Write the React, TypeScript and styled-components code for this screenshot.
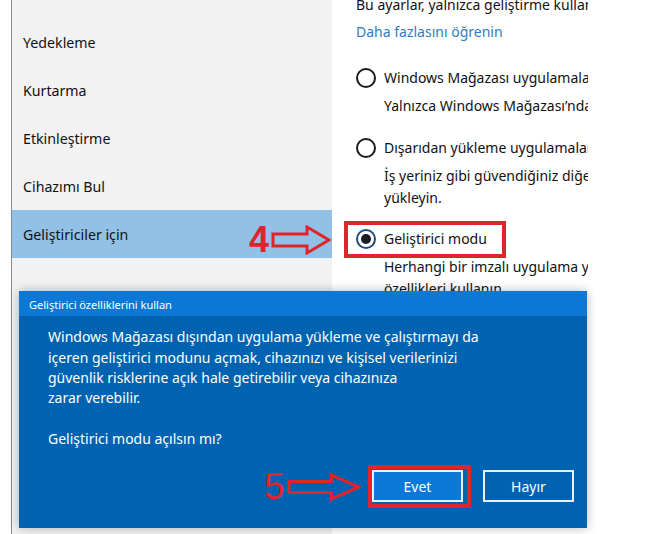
import React from "react";
import styled, { createGlobalStyle } from "styled-components";

const Global = createGlobalStyle`
  html, body { margin: 0; padding: 0; background: #ffffff; }
  body { font-family: "Noto Sans", "Open Sans", sans-serif; }
`;

const Stage = styled.div`
  position: relative;
  width: 671px;
  height: 534px;
  overflow: hidden;
  background: #ffffff;
  font-family: "Noto Sans", "Open Sans", sans-serif;
`;

const Window = styled.div`
  display: flex;
  width: 576px;
  height: 534px;
  margin-left: 11px;
  border-left: 1px solid #8a8a8a;
  overflow: hidden;
`;

const Nav = styled.nav`
  width: 320px;
  flex: none;
  background: #f2f2f2;
  padding-top: 18px;
  display: flex;
  flex-direction: column;
`;

const NavItem = styled.div<{ $active?: boolean }>`
  height: 48px;
  display: flex;
  align-items: center;
  padding-left: 11px;
  font-size: 14.2px;
  color: #111;
  background: ${(p) => (p.$active ? "#91c1e7" : "transparent")};
`;

const Pane = styled.section`
  flex: 1;
  min-width: 0;
  background: #ffffff;
  overflow: hidden;
  padding-left: 24px;
`;

const PaneInner = styled.div`
  width: 420px;
  font-size: 14px;
  line-height: 22px;
  color: #111;
  white-space: nowrap;
`;

const Intro = styled.div`
  margin-top: -6px;
`;

const Link = styled.div`
  margin-top: 5px;
  color: #2f7cc2;
`;

const Option = styled.div<{ $gap: number }>`
  margin-top: ${(p) => p.$gap}px;
`;

const RadioRow = styled.div`
  display: flex;
  align-items: center;
  gap: 8px;
  height: 22px;
`;

const Radio = styled.span<{ $checked?: boolean }>`
  width: 20px;
  height: 20px;
  box-sizing: border-box;
  border-radius: 50%;
  border: 2px solid ${(p) => (p.$checked ? "#1f4d7e" : "#1a1a1a")};
  display: flex;
  align-items: center;
  justify-content: center;
  flex: none;
  &::after {
    content: "";
    display: ${(p) => (p.$checked ? "block" : "none")};
    width: 10px;
    height: 10px;
    border-radius: 50%;
    background: #1b1b22;
  }
`;

const Desc = styled.div`
  margin-top: 6px;
  padding-left: 28px;
`;

const Dialog = styled.div`
  position: absolute;
  left: 19px;
  top: 291px;
  width: 568px;
  height: 237px;
  background: #0063b1;
  box-shadow: 0 0 10px rgba(0, 0, 0, 0.28);
  display: flex;
  flex-direction: column;
  color: #fff;
`;

const DialogTitle = styled.div`
  height: 31px;
  background: #0b78d6;
  display: flex;
  align-items: center;
  padding-left: 10px;
  padding-top: 2px;
  box-sizing: border-box;
  font-size: 11px;
`;

const DialogBody = styled.div`
  padding: 11px 20px 0 29px;
  font-size: 14px;
  line-height: 20.4px;
  flex: 1;
`;

const Para = styled.p`
  margin: 0 0 20.4px 0;
`;

const ButtonRow = styled.div`
  display: flex;
  justify-content: flex-end;
  gap: 20px;
  padding: 0 13px 26px 0;
`;

const DialogButton = styled.button<{ $primary?: boolean }>`
  width: 91px;
  height: 32px;
  box-sizing: border-box;
  border: 2px solid #e8f0f8;
  background: ${(p) => (p.$primary ? "#0b78d6" : "#0063b1")};
  color: #fff;
  font-family: "Noto Sans", "Open Sans", sans-serif;
  font-size: 14px;
  padding: 0;
`;

const Highlight = styled.div<{ $x: number; $y: number; $w: number; $h: number }>`
  position: absolute;
  left: ${(p) => p.$x}px;
  top: ${(p) => p.$y}px;
  width: ${(p) => p.$w}px;
  height: ${(p) => p.$h}px;
  box-sizing: border-box;
  border: 4px solid #e0242c;
  pointer-events: none;
`;

const Marker = styled.div<{ $x: number; $y: number }>`
  position: absolute;
  left: ${(p) => p.$x}px;
  top: ${(p) => p.$y}px;
  display: flex;
  align-items: center;
  gap: 2px;
  color: #e0242c;
  pointer-events: none;
`;

const MarkerNum = styled.span<{ $size: number; $weight: number }>`
  font-family: "Liberation Sans", "DejaVu Sans", sans-serif;
  font-size: ${(p) => p.$size}px;
  font-weight: ${(p) => p.$weight};
  line-height: 1;
`;

function Arrow({ w, h }: { w: number; h: number }) {
  const mid = h / 2;
  const shaftHalf = h * 0.2;
  const headX = w * 0.6;
  return (
    <svg width={w} height={h} viewBox={`0 0 ${w} ${h}`}>
      <path
        d={`M2 ${mid - shaftHalf} H${headX} V2 L${w - 2} ${mid} L${headX} ${h - 2} V${mid + shaftHalf} H2 Z`}
        fill="none"
        stroke="#e0242c"
        strokeWidth={3}
        strokeLinejoin="miter"
      />
    </svg>
  );
}

export default function App() {
  return (
    <Stage>
      <Global />
      <Window>
        <Nav>
          <NavItem>Yedekleme</NavItem>
          <NavItem>Kurtarma</NavItem>
          <NavItem>Etkinleştirme</NavItem>
          <NavItem>Cihazımı Bul</NavItem>
          <NavItem $active>Geliştiriciler için</NavItem>
        </Nav>
        <Pane>
          <PaneInner>
            <Intro>Bu ayarlar, yalnızca geliştirme kullanımı için tasarlanmıştır.</Intro>
            <Link>Daha fazlasını öğrenin</Link>
            <Option $gap={24}>
              <RadioRow>
                <Radio />
                Windows Mağazası uygulamaları
              </RadioRow>
              <Desc>Yalnızca Windows Mağazası’ndan uygulama yükleyin.</Desc>
            </Option>
            <Option $gap={20}>
              <RadioRow>
                <Radio />
                Dışarıdan yükleme uygulamaları
              </RadioRow>
              <Desc>
                İş yeriniz gibi güvendiğiniz diğer kaynaklardan uygulama
                <br />
                yükleyin.
              </Desc>
            </Option>
            <Option $gap={19}>
              <RadioRow>
                <Radio $checked />
                Geliştirici modu
              </RadioRow>
              <Desc>
                Herhangi bir imzalı uygulama yükleyin ve gelişmiş geliştirme
                <br />
                özellikleri kullanın.
              </Desc>
            </Option>
          </PaneInner>
        </Pane>
      </Window>

      <Highlight $x={344} $y={221} $w={162} $h={37} />
      <Marker $x={249} $y={222}>
        <MarkerNum $size={36} $weight={700}>4</MarkerNum>
        <Arrow w={60} h={30} />
      </Marker>

      <Dialog>
        <DialogTitle>Geliştirici özelliklerini kullan</DialogTitle>
        <DialogBody>
          <Para>
            Windows Mağazası dışından uygulama yükleme ve çalıştırmayı da
            <br />
            içeren geliştirici modunu  açmak, cihazınızı ve kişisel verilerinizi
            <br />
            güvenlik risklerine açık hale getirebilir veya cihazınıza
            <br />
            zarar verebilir.
          </Para>
          <Para>Geliştirici modu açılsın mı?</Para>
        </DialogBody>
        <ButtonRow>
          <DialogButton $primary>Evet</DialogButton>
          <DialogButton>Hayır</DialogButton>
        </ButtonRow>
      </Dialog>

      <Highlight $x={368} $y={465} $w={103} $h={43} />
      <Marker $x={264} $y={468}>
        <MarkerNum $size={37} $weight={400}>5</MarkerNum>
        <Arrow w={74} h={28} />
      </Marker>
    </Stage>
  );
}
